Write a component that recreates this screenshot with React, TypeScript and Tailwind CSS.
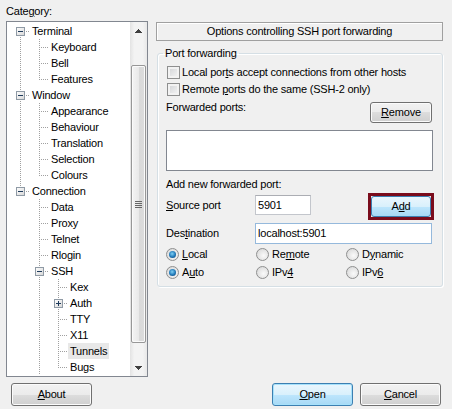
import React from 'react'

type Cell = 'blank' | 'pipe' | 'tee' | 'last' | 'first'

interface TreeRow {
  label: string
  guides: Cell[]
  node: Cell
  exp?: '-' | '+'
  selected?: boolean
}

const rows: TreeRow[] = [
  { label: 'Terminal', guides: [], node: 'first', exp: '-' },
  { label: 'Keyboard', guides: ['pipe'], node: 'tee' },
  { label: 'Bell', guides: ['pipe'], node: 'tee' },
  { label: 'Features', guides: ['pipe'], node: 'last' },
  { label: 'Window', guides: [], node: 'tee', exp: '-' },
  { label: 'Appearance', guides: ['pipe'], node: 'tee' },
  { label: 'Behaviour', guides: ['pipe'], node: 'tee' },
  { label: 'Translation', guides: ['pipe'], node: 'tee' },
  { label: 'Selection', guides: ['pipe'], node: 'tee' },
  { label: 'Colours', guides: ['pipe'], node: 'last' },
  { label: 'Connection', guides: [], node: 'last', exp: '-' },
  { label: 'Data', guides: ['blank'], node: 'tee' },
  { label: 'Proxy', guides: ['blank'], node: 'tee' },
  { label: 'Telnet', guides: ['blank'], node: 'tee' },
  { label: 'Rlogin', guides: ['blank'], node: 'tee' },
  { label: 'SSH', guides: ['blank'], node: 'tee', exp: '-' },
  { label: 'Kex', guides: ['blank', 'pipe'], node: 'tee' },
  { label: 'Auth', guides: ['blank', 'pipe'], node: 'tee', exp: '+' },
  { label: 'TTY', guides: ['blank', 'pipe'], node: 'tee' },
  { label: 'X11', guides: ['blank', 'pipe'], node: 'tee' },
  { label: 'Tunnels', guides: ['blank', 'pipe'], node: 'tee', selected: true },
  { label: 'Bugs', guides: ['blank', 'pipe'], node: 'last' },
]

// one 19x16 column of the tree's dotted connector lines
function TreeCell({ kind, exp }: { kind: Cell; exp?: '-' | '+' }) {
  const v =
    kind === 'pipe' || kind === 'tee' ? [0, 16] : kind === 'last' ? [0, 9] : kind === 'first' ? [8, 16] : null
  const branch = kind === 'tee' || kind === 'last' || kind === 'first'
  return (
    <svg width="19" height="16" className="shrink-0" shapeRendering="crispEdges">
      <defs>
        <linearGradient id="tbox" x1="0" y1="0" x2="1" y2="1">
          <stop offset="0" stopColor="#ffffff" />
          <stop offset="1" stopColor="#d6d6d6" />
        </linearGradient>
      </defs>
      {v && <line x1="9.5" y1={v[0]} x2="9.5" y2={v[1]} stroke="#a0a0a0" strokeDasharray="1 1" />}
      {branch && <line x1="11" y1="8.5" x2="19" y2="8.5" stroke="#a0a0a0" strokeDasharray="1 1" />}
      {exp && (
        <g>
          <rect x="5.5" y="4.5" width="8" height="8" fill="url(#tbox)" stroke="#8f9aa5" />
          <line x1="7" y1="8.5" x2="12" y2="8.5" stroke="#1e3b5c" />
          {exp === '+' && <line x1="9.5" y1="6" x2="9.5" y2="11" stroke="#1e3b5c" />}
        </g>
      )}
    </svg>
  )
}

function TreeItem({ row }: { row: TreeRow }) {
  return (
    <div className="flex h-[16px] items-center">
      {row.guides.map((g, i) => (
        <TreeCell key={i} kind={g} />
      ))}
      <TreeCell kind={row.node} exp={row.exp} />
      <span className={`px-[2px] leading-[16px] whitespace-nowrap ${row.selected ? 'bg-[#e8e8e8]' : ''}`}>
        {row.label}
      </span>
    </div>
  )
}

function Arrow({ up }: { up?: boolean }) {
  return (
    <div className="h-[17px] flex items-center justify-center">
      <svg width="7" height="4" shapeRendering="crispEdges">
        {up ? (
          <polygon points="3.5,0 7,4 0,4" fill="#3f3f3f" />
        ) : (
          <polygon points="0,0 7,0 3.5,4" fill="#3f3f3f" />
        )}
      </svg>
    </div>
  )
}

function ScrollBar() {
  return (
    <div className="w-[17px] shrink-0 flex flex-col bg-[linear-gradient(to_right,#e3e3e3,#f3f3f3_25%,#f3f3f3_75%,#e8e8e8)]">
      <Arrow up />
      <div className="h-[26px]" />
      <div className="h-[278px] mx-[1px] rounded-[2px] border border-[#979797] bg-[linear-gradient(to_right,#f4f4f4,#e9e9e9_50%,#d9d9d9_50%,#dcdcdc)] shadow-[inset_0_0_0_1px_#fafafa] flex flex-col items-center justify-center gap-[1px]">
        <div className="w-[7px] h-[1px] bg-[#666]" />
        <div className="w-[7px] h-[1px] bg-[#666]" />
        <div className="w-[7px] h-[1px] bg-[#666]" />
        <div className="w-[7px] h-[1px] bg-[#666]" />
      </div>
      <div className="flex-1" />
      <Arrow />
    </div>
  )
}

function Check() {
  return (
    <span className="ml-[1px] mr-[2px] w-[13px] h-[13px] shrink-0 border border-[#8e8f8f] bg-[linear-gradient(135deg,#cfd1d4,#f7f7f7)] shadow-[inset_0_0_0_2px_#f2f2f2]" />
  )
}

function Radio({ on }: { on?: boolean }) {
  return (
    <span className="mr-[3px] w-[13px] h-[13px] shrink-0 rounded-full border border-[#8e8f8f] bg-[radial-gradient(circle_at_60%_60%,#fafafa,#d3d3d3)] flex items-center justify-center">
      {on && (
        <span className="w-[7px] h-[7px] rounded-full bg-[radial-gradient(circle_at_45%_40%,#7fd0f5_0%,#1f78b8_55%,#0a3563_100%)]" />
      )}
    </span>
  )
}

const btn =
  'rounded-[3px] border border-[#707070] bg-[linear-gradient(#f2f2f2_0%,#ebebeb_50%,#dddddd_50%,#cfcfcf_100%)] shadow-[inset_0_0_0_1px_#fbfbfb] flex items-center justify-center leading-[13px]'
const btnBlue =
  'rounded-[3px] border border-[#3c7fb1] bg-[linear-gradient(#eaf6fd_0%,#d9f0fc_50%,#bee6fd_50%,#a7d9f5_100%)] flex items-center justify-center leading-[13px]'

export default function App() {
  return (
    <div className="w-[452px] h-[409px] bg-[#f0f0f0] text-black text-[11px] tracking-[-0.2px] font-['Liberation_Sans',Arial,sans-serif] select-none overflow-hidden">
      <div className="flex">
        {/* Category tree */}
        <div className="ml-[6px] w-[142px] shrink-0">
          <div className="h-[21px] pt-[5px] leading-[13px]">
            Cate<u>g</u>ory:
          </div>
          <div className="h-[356px] border border-[#828790] bg-white flex">
            <div className="flex-1 pt-[1px] pl-[4px] overflow-hidden">
              {rows.map((r) => (
                <TreeItem key={r.label} row={r} />
              ))}
            </div>
            <ScrollBar />
          </div>
        </div>

        {/* Options panel */}
        <div className="ml-[8px] w-[287px] pt-[22px]">
          <div className="h-[19px] border border-[#a0a0a0] shadow-[inset_1px_1px_0_#fff] text-center leading-[17px]">
            Options controlling SSH port forwarding
          </div>

          <fieldset className="mt-[6px] ml-[1px] w-[286px] p-0 border border-[#d5dfe5] rounded-[3px] shadow-[inset_1px_1px_0_#fff,1px_1px_0_#fff]">
            <legend className="ml-[5px] px-[2px] leading-[13px]">Port forwarding</legend>
            <div className="pl-[8px] pr-[9px] pt-[4px] pb-[5px]">
              <div className="h-[17px] flex items-center">
                <Check />
                <span>
                  Local por<u>t</u>s accept connections from other hosts
                </span>
              </div>
              <div className="h-[17px] flex items-center">
                <Check />
                <span>
                  Remote <u>p</u>orts do the same (SSH-2 only)
                </span>
              </div>

              <div className="flex items-start">
                <span className="mt-[3px] leading-[13px]">Forwarded ports:</span>
                <button className={`${btn} ml-auto mr-[1px] mt-[4px] w-[62px] h-[21px]`}>
                  <u>R</u>emove
                </button>
              </div>

              <div className="mt-[7px] h-[41px] border border-[#828790] bg-white" />

              <div className="mt-[7px] leading-[13px]">Add new forwarded port:</div>

              <div className="mt-[2px] flex items-start">
                <span className="w-[89px] mt-[6px] leading-[13px]">
                  <u>S</u>ource port
                </span>
                <div className="mt-[2px] w-[56px] h-[20px] border border-[#c3c6cc] border-t-[#abadb3] bg-white pl-[2px] leading-[18px]">
                  5901
                </div>
                <div className="ml-auto mr-[-1px] w-[66px] h-[27px] border-[3px] border-[#7a0c1c]">
                  <button className={`${btnBlue} w-full h-full`}>
                    A<u>d</u>d
                  </button>
                </div>
              </div>

              <div className="mt-[3px] flex items-center">
                <span className="w-[89px] leading-[13px]">
                  Des<u>t</u>ination
                </span>
                <div className="flex-1 mr-[1px] h-[21px] border border-[#95b9dc] bg-white pl-[2px] leading-[19px]">
                  localhost:5901
                </div>
              </div>

              <div className="mt-[1px] grid grid-cols-[90px_90px_1fr]">
                <div className="h-[18px] flex items-center">
                  <Radio on />
                  <span>
                    <u>L</u>ocal
                  </span>
                </div>
                <div className="h-[18px] flex items-center">
                  <Radio />
                  <span>
                    Re<u>m</u>ote
                  </span>
                </div>
                <div className="h-[18px] flex items-center">
                  <Radio />
                  <span>
                    D<u>y</u>namic
                  </span>
                </div>
                <div className="h-[18px] flex items-center">
                  <Radio on />
                  <span>
                    A<u>u</u>to
                  </span>
                </div>
                <div className="h-[18px] flex items-center">
                  <Radio />
                  <span>
                    IPv<u>4</u>
                  </span>
                </div>
                <div className="h-[18px] flex items-center">
                  <Radio />
                  <span>
                    IPv<u>6</u>
                  </span>
                </div>
              </div>
            </div>
          </fieldset>
        </div>
      </div>

      {/* Dialog buttons */}
      <div className="mt-[6px] flex px-[11px]">
        <button className={`${btn} w-[81px] h-[23px]`}>
          <u>A</u>bout
        </button>
        <button className={`${btnBlue} ml-auto w-[81px] h-[23px] shadow-[inset_0_0_0_1px_#a6e1fb]`}>
          <u>O</u>pen
        </button>
        <button className={`${btn} ml-[7px] w-[81px] h-[23px]`}>
          <u>C</u>ancel
        </button>
      </div>
    </div>
  )
}
